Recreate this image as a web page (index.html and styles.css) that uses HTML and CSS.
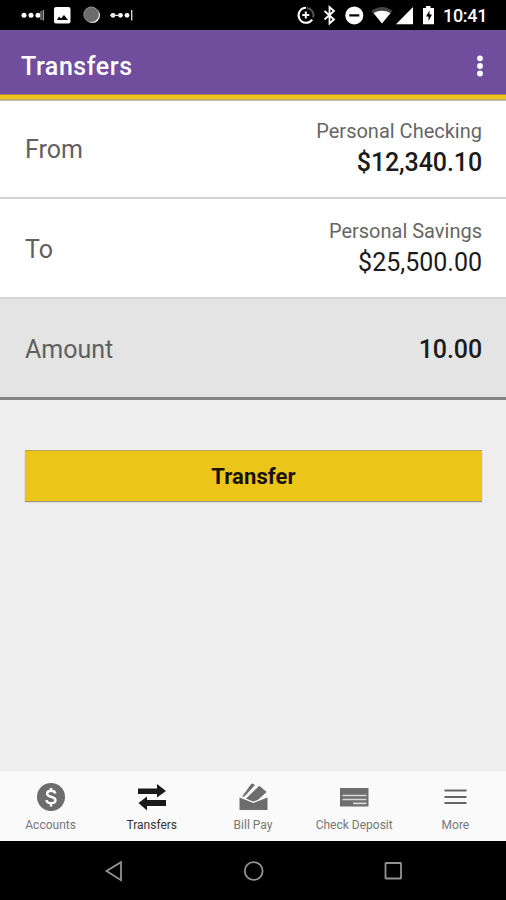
FILE: index.html
```html
<!DOCTYPE html>
<html lang="en">
<head>
<meta charset="utf-8">
<title>Transfers</title>
<link rel="stylesheet" href="styles.css">
</head>
<body>
<div class="screen">
  <div class="status">
    <svg class="status-left" viewBox="0 0 160 30" width="160" height="30">
      <g fill="#fff">
        <circle cx="24" cy="15.3" r="2.5"/><circle cx="31" cy="15.3" r="2.5"/><circle cx="38" cy="15.3" r="2.5"/>
        <path d="M41 11v9" stroke="#777" stroke-width="1.5"/><path d="M43.300 10v10.500" stroke="#999" stroke-width="1.5"/>
        <path fill-rule="evenodd" d="M56 7h12.500q2 0 2 2v12.500q0 2-2 2H56q-2 0-2-2V9q0-2 2-2zM57 20h11l-4-5-3 3.500-2-2z"/>
        <circle cx="92.500" cy="15.500" r="7.500"/><circle cx="91.300" cy="14.500" r="7.500" fill="#6c6c6c" stroke="#929292"/>
        <circle cx="113" cy="15.300" r="2.400"/><circle cx="120.500" cy="15.300" r="2.400"/><circle cx="127" cy="15.300" r="2.400"/>
        <path d="M110 15.300h10M131.700 10v10.500" stroke="#ddd" stroke-width="1.300"/>
      </g>
    </svg>
    <svg class="status-right" viewBox="290 0 150 30" width="150" height="30">
      <g fill="none" stroke="#fff" stroke-width="2">
        <path d="M306 7.800a7.500 7.500 0 1 0 6.200 11.800"/><path d="M307 7.900a7.500 7.500 0 0 1 6.300 9.500" stroke="#555"/>
        <path d="M305.800 11.500v7M302.300 15h7"/>
        <path d="M324.500 11l9.500 8.500-4.500 4V7l4.500 4-9.500 8.500" stroke-width="1.800"/>
      </g>
      <circle cx="354.300" cy="15.400" r="9" fill="#fff"/><path d="M349.300 15.400h10" stroke="#000" stroke-width="2.200"/>
      <path d="M371.500 11q10.500-8 21 0L382 23.500z" fill="#454545"/><path d="M373.500 13q8.500-4.500 17 0L382 23.500z" fill="#fff"/>
      <path d="M396 24.300L413 7v17.300z" fill="#fff"/>
      <path d="M426 6h4.500v2h3.500v16.300h-11V8h3z" fill="#fff"/><path d="M429.500 10.500l-3.500 6h2.500v4.500l3.500-6.500h-2.500z" fill="#000"/>
    </svg>
    <span class="clock">10:41</span>
  </div>
  <header class="appbar">
    <h1>Transfers</h1>
    <svg viewBox="0 0 8 24" width="8" height="24" fill="#fff"><circle cx="4" cy="4.300" r="2.900"/><circle cx="4" cy="12" r="2.900"/><circle cx="4" cy="19.500" r="2.900"/></svg>
  </header>
  <main>
    <div class="row">
      <span class="label">From</span>
      <div class="account"><span class="name">Personal Checking</span><span class="money strong">$12,340.10</span></div>
    </div>
    <div class="row">
      <span class="label">To</span>
      <div class="account"><span class="name">Personal Savings</span><span class="money">$25,500.00</span></div>
    </div>
    <div class="row amount">
      <span class="label">Amount</span>
      <span class="money strong">10.00</span>
    </div>
    <button class="transfer">Transfer</button>
  </main>
  <nav class="tabs">
    <div class="tab">
      <svg viewBox="0 0 30 30" width="30" height="30"><circle cx="15" cy="15" r="14" fill="#6d6d6d"/><path d="M19.300 11.500q-.5-2.700-4.200-2.700-4 0-4 2.900c0 4 8.400 2.200 8.400 6.300 0 2-1.700 3.200-4.400 3.200-3.700 0-4.500-1.900-4.600-3.200M15 6v3.500M15 20.500V24.500" fill="none" stroke="#fff" stroke-width="2.400"/></svg>
      <span>Accounts</span>
    </div>
    <div class="tab active">
      <svg viewBox="0 0 30 30" width="30" height="30" fill="#1a1a1a"><path d="M1 6.500h19V2l9 7-9 6.500V12H1zM29 24H10v4.500L1.500 21l8.500-6.500V18h19z"/></svg>
      <span>Transfers</span>
    </div>
    <div class="tab">
      <svg viewBox="0 0 30 30" width="30" height="30" fill="#6d6d6d"><path d="M1.500 15.500l14 5.500 14-5.500V28h-28z"/><path d="M13 2.300l1.500-.8 2.500 1.500L6.500 14.500 4 14.800z"/><path d="M21.300 3.700l7.400 6.300-9 8-4.700 1.500-7-3z"/></svg>
      <span>Bill Pay</span>
    </div>
    <div class="tab">
      <svg viewBox="0 0 30 30" width="30" height="30"><path d="M1 6H29.500v18.500H1z" fill="#6d6d6d"/><path d="M3.500 13.500h24M3.500 17.500h24M14 21.300h13.500" stroke="#d8d8d8" stroke-width="1.700"/></svg>
      <span>Check Deposit</span>
    </div>
    <div class="tab">
      <svg viewBox="0 0 30 30" width="30" height="30"><path d="M4.500 8.500h22M4.500 15h22M4.500 21h22" stroke="#666" stroke-width="2"/></svg>
      <span>More</span>
    </div>
  </nav>
  <footer class="system">
    <svg viewBox="0 0 506 59" width="506" height="59" fill="none" stroke="#929292" stroke-width="1.800"><path d="M121 21.200v18L106.500 30z"/><circle cx="253.700" cy="30" r="8.900"/><rect x="385.500" y="22" width="15.500" height="15.500" rx=".5"/></svg>
  </footer>
</div>
</body>
</html>
```
FILE: styles.css
```css
* { box-sizing: border-box; }
body { margin: 0; font-family: Roboto, "Liberation Sans", sans-serif; }
svg { display: block; flex: none; }
.screen { width: 506px; height: 900px; display: flex; flex-direction: column; background: #eee; }
.status { height: 30px; flex: none; background: #000; display: flex; justify-content: space-between; align-items: center; padding-right: 19px; }
.status-right { margin-left: auto; }
.clock { color: #fff; font-size: 18px; font-weight: 500; line-height: 30px; padding-top: 2px; width: 44px; margin-left: 3px; letter-spacing: -.3px; }
.appbar { height: 71px; flex: none; background: #704e9d; border-bottom: 1px solid #c1bdb6; box-shadow: inset 0 -1px #c5a94e, inset 0 -5px #edc31d, inset 0 -6px #a98348; display: flex; align-items: center; justify-content: space-between; padding: 2px 22px 0 21px; }
h1 { margin: 0; color: #fff; font-size: 25px; font-weight: 500; letter-spacing: .55px; }
main { flex: 1; display: flex; flex-direction: column; }
.row { height: 100px; flex: none; display: flex; align-items: center; justify-content: space-between; padding: 2px 24px 0 25px; background: #fff; border-bottom: 2px solid #d4d4d4; }
.row:first-child { height: 98px; padding-top: 0; }
.label { font-size: 25px; color: #606060; }
.account { display: flex; flex-direction: column; align-items: flex-end; padding-top: 1px; }
.name { font-size: 20px; line-height: 26px; color: #666; }
.money { font-size: 25px; line-height: 38px; color: #1b1b1b; }
.strong { font-weight: 500; letter-spacing: -.1px; }
.row.amount { height: 101px; padding-top: 3px; background: #e4e4e4; border-bottom: 3px solid #848484; }
.transfer { margin: 51px 24px 0 25px; height: 50px; border: 0; padding: 0; background: #ecc51b; box-shadow: 0 -1px #b7a456, 0 1px 1px #9b9685; font: 700 22px Roboto, sans-serif; letter-spacing: .1px; color: #171307; }
.tabs { height: 70px; flex: none; display: grid; grid-template-columns: repeat(5, 1fr); background: #fafafa; }
.tab { display: flex; flex-direction: column; align-items: center; padding-top: 11px; font-size: 12px; line-height: 16px; color: #777; gap: 5px; white-space: nowrap; }
.active { color: #333; }
.system { height: 59px; flex: none; background: #000; }
```
